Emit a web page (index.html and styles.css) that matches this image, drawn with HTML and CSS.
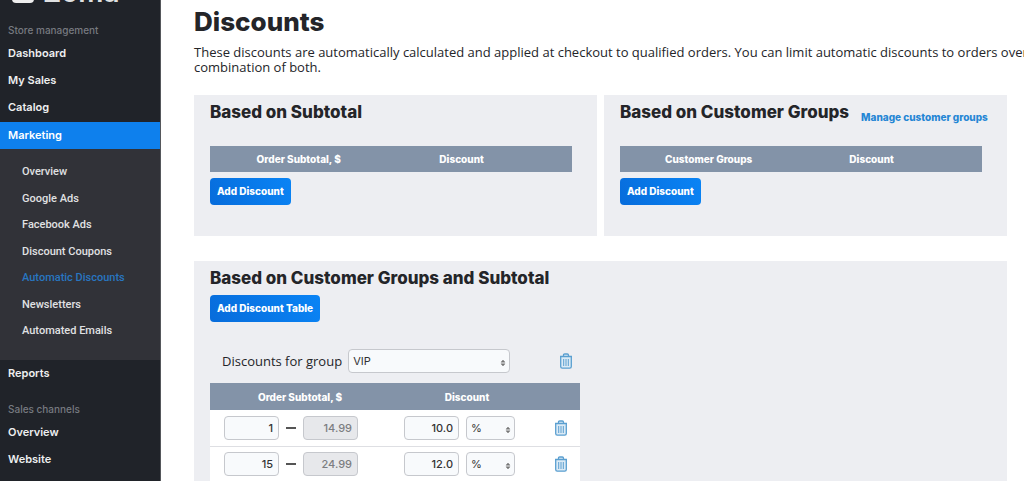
FILE: index.html
```html
<!DOCTYPE html>
<html lang="en">
<head>
<meta charset="utf-8">
<title>Discounts</title>
<link rel="stylesheet" href="styles.css">
</head>
<body>
<svg class="sprite" aria-hidden="true">
  <symbol id="trash" viewBox="0 0 14 16">
    <g fill="none" stroke="currentColor">
      <path d="M1 3.500h12M4.500 3.500V2.200Q4.500 1 5.700 1h2.600Q9.500 1 9.500 2.200v1.300M1.700 3.500V13.500Q1.700 15.200 3.200 15.200h7.600Q12.300 15.200 12.300 13.500V3.500" fill="#dcebf6" stroke-width="1.300"/>
      <path d="M4.700 6v7M7 6v7M9.300 6v7" stroke-width="1"/>
    </g>
  </symbol>
  <symbol id="updown" viewBox="0 0 6 8">
    <path d="M1 3.200L3 1l2 2.200zM1 4.800L3 7l2-2.200z" fill="currentColor" stroke="currentColor" stroke-width=".5"/>
  </symbol>
</svg>
<div class="app">
  <aside class="sidebar">
    <a class="brand" href="#"><span class="brand-mark"></span><span>Zoma</span></a>
    <nav class="nav">
      <p class="nav-label">Store management</p>
      <a class="nav-link" href="#">Dashboard</a>
      <a class="nav-link" href="#">My Sales</a>
      <a class="nav-link" href="#">Catalog</a>
      <a class="nav-link active" href="#">Marketing</a>
      <div class="subnav">
        <a href="#">Overview</a>
        <a href="#">Google Ads</a>
        <a href="#">Facebook Ads</a>
        <a href="#">Discount Coupons</a>
        <a class="current" href="#">Automatic Discounts</a>
        <a href="#">Newsletters</a>
        <a href="#">Automated Emails</a>
      </div>
      <a class="nav-link" href="#">Reports</a>
      <p class="nav-label spaced">Sales channels</p>
      <a class="nav-link" href="#">Overview</a>
      <a class="nav-link" href="#">Website</a>
    </nav>
  </aside>
  <main class="main">
    <h1>Discounts</h1>
    <div class="intro">
      <p>These discounts are automatically calculated and applied at checkout to qualified orders. You can limit automatic discounts to orders over a</p>
      <p>combination of both.</p>
    </div>
    <div class="cards">
      <section class="card">
        <div class="card-head"><h2>Based on Subtotal</h2></div>
        <table class="rates">
          <thead><tr><th class="first">Order Subtotal, $</th><th class="second">Discount</th><th class="last"></th></tr></thead>
        </table>
        <button class="btn" type="button">Add Discount</button>
      </section>
      <section class="card">
        <div class="card-head"><h2>Based on Customer Groups</h2><a href="#">Manage customer groups</a></div>
        <table class="rates">
          <thead><tr><th class="first">Customer Groups</th><th class="second">Discount</th><th class="last"></th></tr></thead>
        </table>
        <button class="btn" type="button">Add Discount</button>
      </section>
      <section class="card wide">
        <h2>Based on Customer Groups and Subtotal</h2>
        <button class="btn" type="button">Add Discount Table</button>
        <div class="group-row">
          <label for="group">Discounts for group</label>
          <span class="select group-select"><select id="group"><option>VIP</option></select><svg><use href="#updown"/></svg></span>
          <button class="icon-btn" type="button" aria-label="Delete table"><svg><use href="#trash"/></svg></button>
        </div>
        <table class="rates tiers">
          <thead><tr><th class="range">Order Subtotal, $</th><th class="amount">Discount</th><th class="remove"></th></tr></thead>
          <tbody>
            <tr>
              <td><div class="fields"><input aria-label="From" value="1"><span class="dash"></span><input aria-label="To" value="14.99" disabled></div></td>
              <td><div class="fields"><input aria-label="Discount" value="10.0"><span class="select"><select aria-label="Unit"><option>%</option></select><svg><use href="#updown"/></svg></span></div></td>
              <td><button class="icon-btn" type="button" aria-label="Delete row"><svg><use href="#trash"/></svg></button></td>
            </tr>
            <tr>
              <td><div class="fields"><input aria-label="From" value="15"><span class="dash"></span><input aria-label="To" value="24.99" disabled></div></td>
              <td><div class="fields"><input aria-label="Discount" value="12.0"><span class="select"><select aria-label="Unit"><option>%</option></select><svg><use href="#updown"/></svg></span></div></td>
              <td><button class="icon-btn" type="button" aria-label="Delete row"><svg><use href="#trash"/></svg></button></td>
            </tr>
          </tbody>
        </table>
      </section>
    </div>
  </main>
</div>
</body>
</html>
```
FILE: styles.css
```css
* { box-sizing: border-box; }
html, body { height: 100%; }
body {
  margin: 0;
  overflow: hidden;
  background: #fff;
  color: #242529;
  font-family: Inter, "Liberation Sans", sans-serif;
}
h1, h2, p { margin: 0; }
a { text-decoration: none; color: #2586d5; }
button, input, select { font-family: inherit; }
.sprite { display: none; }
.app { display: flex; height: 100%; }

.sidebar {
  flex: 0 0 161px;
  background: #202329;
  border-right: 1px solid #55575b;
  overflow: hidden;
}
.brand {
  display: flex;
  align-items: flex-end;
  gap: 9px;
  height: 32px;
  margin-top: -27px;
  padding: 0 12px;
  color: #dfe0e1;
  font-size: 28px;
  font-weight: 600;
  line-height: 26px;
}
.brand-mark {
  width: 22px;
  height: 22px;
  margin-bottom: 2px;
  border-radius: 4px;
  background: #eee;
}
.nav-label {
  padding: 17px 8px 2px;
  color: #777a80;
  font-size: 10px;
  font-weight: 500;
  line-height: 16px;
}
.nav-label.spaced { padding-top: 14px; }
.nav-link {
  display: block;
  padding: 0 8px;
  color: #eeeff0;
  font-size: 11px;
  font-weight: 600;
  line-height: 27px;
}
.nav-link.active { margin-top: 1px; background: #0e80ed; color: #fff; }
.subnav {
  display: flex;
  flex-direction: column;
  justify-content: space-between;
  min-height: 211px;
  padding: 15px 0 21px 22px;
  background: #313238;
}
.subnav a {
  color: #e0e1e3;
  font-family: Roboto, sans-serif;
  font-size: 11px;
  font-weight: 500;
  line-height: 16px;
}
.subnav a.current { color: #2876c1; }

.main { flex: 1; min-width: 0; padding: 6px 17px 0 33px; }
h1 { font-size: 26px; font-weight: 800; line-height: 32px; }
h2 { font-size: 17px; font-weight: 800; line-height: 22px; }
.intro {
  margin: 7px 0 20px;
  font-family: "Open Sans", sans-serif;
  font-size: 13px;
  line-height: 15px;
  white-space: nowrap;
}

.cards {
  display: grid;
  grid-template-columns: minmax(0, 1fr) minmax(0, 1fr);
  column-gap: 7px;
  row-gap: 25px;
}
.card { padding: 6px 16px 31px; background: #edeef2; }
.card.wide { grid-column: 1 / -1; }
.card-head { display: flex; align-items: flex-end; gap: 12px; height: 45px; padding-bottom: 21px; white-space: nowrap; }
.card-head h2 { align-self: flex-start; }
.card-head a { font-size: 10px; font-weight: 800; line-height: 16px; }

.rates {
  width: calc(100% - 9px);
  border-collapse: collapse;
  table-layout: fixed;
}
.rates th {
  height: 26px;
  padding: 0;
  background: #8393a8;
  color: #fff;
  font-size: 10px;
  font-weight: 800;
}
.first { width: 49%; }
.second { width: 41%; }
.rates + .btn { margin-top: 6px; }

.btn {
  display: block;
  height: 27px;
  padding: 0 7px 1px;
  border: 0;
  border-radius: 4px;
  background: linear-gradient(60deg, #076cdb, #0a84f5);
  color: #fff;
  font-size: 10px;
  font-weight: 800;
}
.card.wide .btn { margin-top: 6px; }

.group-row {
  display: flex;
  align-items: center;
  width: 370px;
  padding: 27px 7px 10px 12px;
}
.group-row label { margin-right: 6px; font-family: "Open Sans", sans-serif; font-size: 13px; line-height: 18px; }
.group-row .icon-btn { margin-left: auto; }

.select { position: relative; width: 49px; }
.select.group-select { width: 162px; }
.select svg {
  position: absolute;
  right: 4px;
  bottom: 6px;
  width: 6px;
  height: 8px;
  color: #777;
  pointer-events: none;
}
.select select { display: block; width: 100%; padding: 0 4px; }
input, select {
  appearance: none;
  height: 24px;
  border: 1px solid #c6c8cd;
  border-radius: 4px;
  background: #f8fafc;
  color: #333;
  font-size: 11px;
}
input { width: 55px; padding: 0 5px; text-align: right; font-weight: 500; }
input:disabled { background: #e7e8eb; color: #7c7d81; }

.tiers { width: 370px; }
.tiers th { height: 27px; }
.tiers td { height: 36px; padding: 0; background: #fff; border-bottom: 1px solid #dedfe3; }
.range { width: 180px; }
.amount { width: 154px; }
.fields { display: flex; align-items: center; gap: 7px; padding-left: 14px; }
.dash { width: 10px; height: 2px; background: #555; }
.icon-btn { display: block; padding: 0; border: 0; background: none; color: #5a9fd0; }
.tiers .icon-btn { padding-left: 10px; }
.icon-btn svg { display: block; width: 14px; height: 16px; }
```
